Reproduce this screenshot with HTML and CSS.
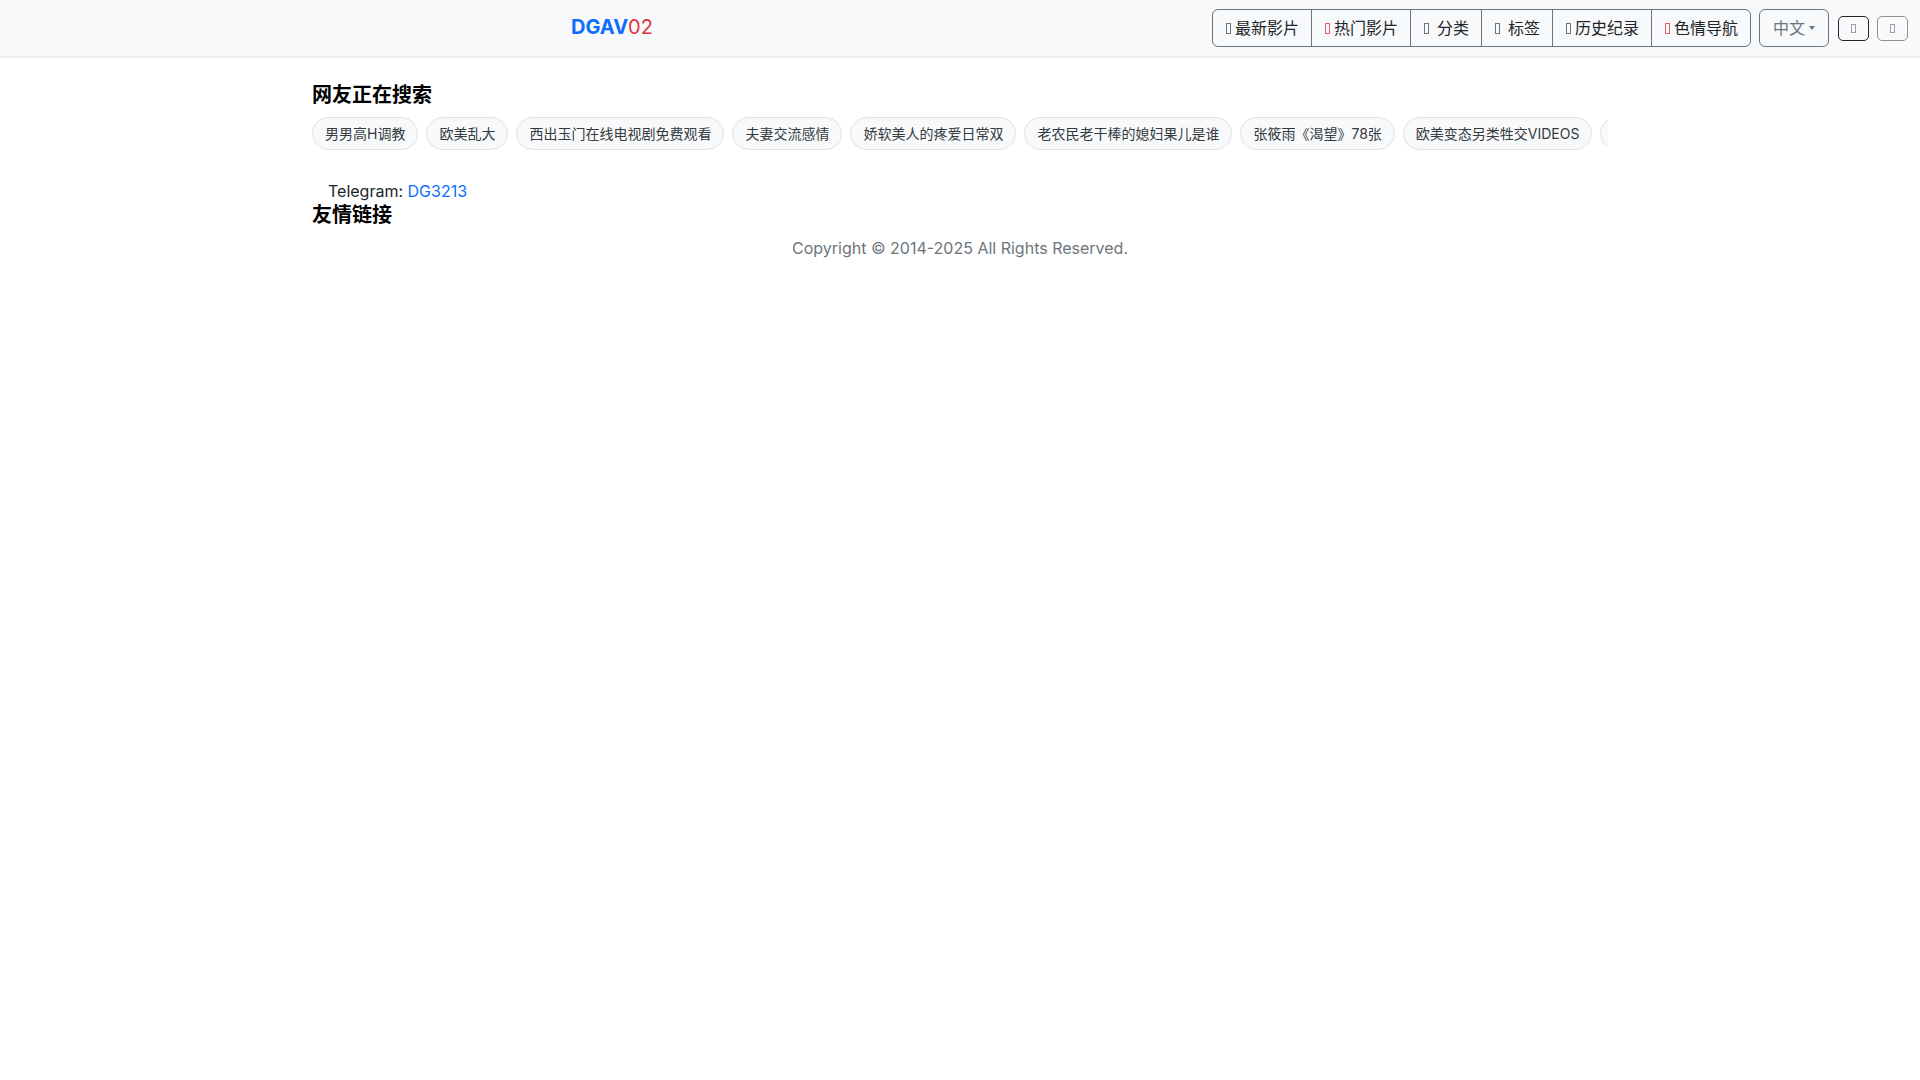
FILE: index.html
```html
<!DOCTYPE html>
<html lang="zh-CN">
<head>
    <meta charset="UTF-8">
    <meta name="viewport" content="width=device-width, initial-scale=1.0">
    <title>DGAV02</title>
    <link rel="stylesheet" href="styles.css">
</head>
<body>

    <header class="navbar">
        <div class="brand">
            <a href="#" class="logo"><span class="logo-main">DGAV</span><span class="logo-num">02</span></a>
        </div>
        <nav class="nav-group">
            <a href="#" class="nav-btn"><span class="ico"></span>最新影片</a>
            <a href="#" class="nav-btn"><span class="ico red"></span>热门影片</a>
            <a href="#" class="nav-btn"><span class="ico wide"></span>分类</a>
            <a href="#" class="nav-btn"><span class="ico wide"></span>标签</a>
            <a href="#" class="nav-btn"><span class="ico"></span>历史纪录</a>
            <a href="#" class="nav-btn"><span class="ico red"></span>色情导航</a>
        </nav>
        <button class="lang-btn">中文<span class="caret"></span></button>
        <button class="sm-btn dark"><span class="ico"></span></button>
        <button class="sm-btn"><span class="ico"></span></button>
    </header>

    <main class="container">
        <h5 class="section-title">网友正在搜索</h5>
        <div class="chips">
            <a href="#" class="chip">男男高H调教</a>
            <a href="#" class="chip">欧美乱大</a>
            <a href="#" class="chip">西出玉门在线电视剧免费观看</a>
            <a href="#" class="chip">夫妻交流感情</a>
            <a href="#" class="chip">娇软美人的疼爱日常双</a>
            <a href="#" class="chip">老农民老干棒的媳妇果儿是谁</a>
            <a href="#" class="chip">张筱雨《渴望》78张</a>
            <a href="#" class="chip">欧美变态另类牲交VIDEOS</a>
            <a href="#" class="chip">日本高清免费观看</a>
        </div>

        <p class="telegram">Telegram: <a href="#">DG3213</a></p>
        <h5 class="section-title links-title">友情链接</h5>
    </main>

    <footer class="footer">Copyright © 2014-2025 All Rights Reserved.</footer>

</body>
</html>
```

FILE: styles.css
```css
body {
    margin: 0;
    font-family: Inter, "Noto Sans CJK SC", sans-serif;
    font-size: 16px;
    line-height: 1.5;
    color: #212529;
    background-color: #fff;
}
a {
    text-decoration: none;
}
/* Top bar */
.navbar {
    display: flex;
    align-items: center;
    height: 56px;
    padding: 0 12px;
    background-color: #f8f9fa;
    border-bottom: 2px solid #ebecee;
}
.brand {
    flex: 1;
    text-align: center;
}
.logo {
    font-size: 20px;
    line-height: 1;
}
.logo-main {
    color: #0d6efd;
    font-weight: 700;
}
.logo-num {
    color: #dc3545;
}
.nav-group {
    display: flex;
    border: 1px solid #6c757d;
    border-radius: 6px;
    margin-right: 8px;
}
.nav-btn {
    display: flex;
    align-items: center;
    padding: 6px 12px;
    color: #212529;
    border-left: 1px solid #6c757d;
}
.nav-btn:first-child {
    border-left: none;
}
/* missing icon glyph boxes */
.ico {
    display: inline-block;
    width: 3px;
    height: 9px;
    border: 1px solid #6c757d;
    margin: 0 4px 0 1px;
}
.ico.wide {
    margin: 0 8px 0 1px;
}
.ico.red {
    border-color: #e35d6a;
}
.lang-btn {
    display: flex;
    align-items: center;
    height: 38px;
    padding: 6px 13px;
    font: inherit;
    color: #6c757d;
    background: transparent;
    border: 1px solid #6c757d;
    border-radius: 6px;
    margin-right: 9px;
}
.caret {
    margin-left: 4px;
    border-top: 4px solid #6c757d;
    border-left: 3.5px solid transparent;
    border-right: 3.5px solid transparent;
}
.sm-btn {
    display: flex;
    align-items: center;
    justify-content: center;
    width: 31px;
    height: 25px;
    padding: 0;
    background: transparent;
    border: 1px solid #8d9297;
    border-radius: 5px;
}
.sm-btn .ico {
    margin: 0;
    height: 7px;
    border-color: #9aa0a5;
}
.sm-btn.dark {
    border-color: #212529;
    margin-right: 8px;
}
/* Content */
.container {
    max-width: 1296px;
    margin: 0 auto;
    padding: 0 12px;
}
.section-title {
    margin: 25px 0 10px;
    font-size: 20px;
    font-weight: 700;
    line-height: 24px;
    color: #000;
}
.chips {
    display: flex;
    gap: 8px;
    overflow: hidden;
    white-space: nowrap;
}
.chip {
    flex-shrink: 0;
    padding: 5px 12px;
    font-size: 14px;
    line-height: 21px;
    color: #343a40;
    background-color: #f8f9fa;
    border: 1px solid #dee2e6;
    border-radius: 50rem;
}
.telegram {
    margin: 29px 0 0;
    padding-left: 16px;
}
.telegram a {
    color: #0d6efd;
}
.links-title {
    margin: 0;
}
.footer {
    margin-top: 9px;
    text-align: center;
    color: #6c757d;
}
```
